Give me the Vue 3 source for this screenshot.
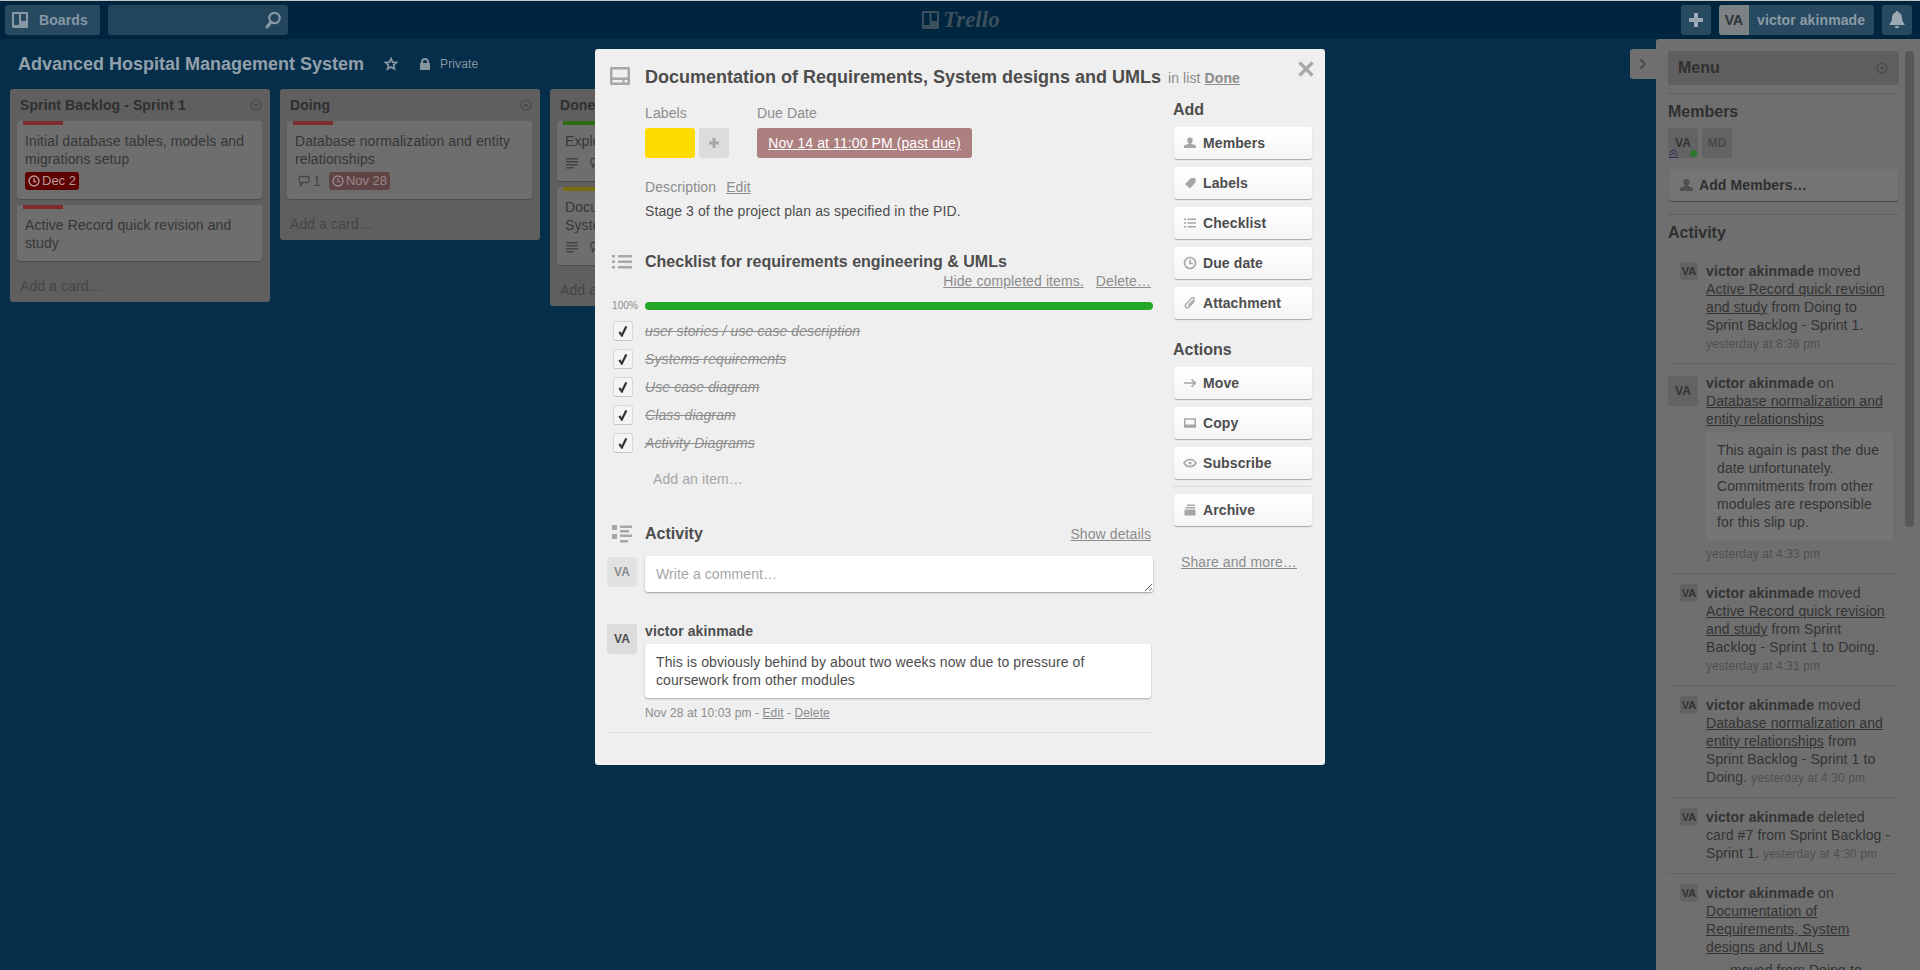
<template>
  <div class="page">
    <header class="topbar">
      <div class="bar-left">
        <button class="bar-btn boards">
          <svg width="16" height="16" viewBox="0 0 16 16"><path fill-rule="evenodd" fill="#8798a5" d="M1 0h14a1 1 0 0 1 1 1v14a1 1 0 0 1-1 1H1a1 1 0 0 1-1-1V1a1 1 0 0 1 1-1zm1 2v11h5V2zm7 0v7h5V2z"/></svg>
          <span>Boards</span>
        </button>
        <div class="search">
          <svg width="18" height="18" viewBox="0 0 18 18" fill="none" stroke="#8798a5"><circle cx="10.5" cy="7" r="5.2" stroke-width="2.2"/><path d="M7 11l-4 5" stroke-width="3" stroke-linecap="round"/></svg>
        </div>
      </div>
      <div class="logo">
        <svg width="17" height="18" viewBox="0 0 17 18"><path fill-rule="evenodd" fill="#3c505e" d="M1.500 0h14A1.500 1.500 0 0 1 17 1.500v15a1.500 1.500 0 0 1-1.500 1.500h-14A1.500 1.500 0 0 1 0 16.500v-15A1.500 1.500 0 0 1 1.500 0zM2 2v12h5.500V2zm7.500 0v8H15V2z"/></svg>
        <span>Trello</span>
      </div>
      <div class="bar-right">
        <button class="bar-btn square">
          <svg width="16" height="16" viewBox="0 0 16 16"><path fill="#9ba8b1" d="M6 1h4v5h5v4h-5v5H6v-5H1V6h5z"/></svg>
        </button>
        <div class="user">
          <span class="user-av">VA</span>
          <span class="user-name">victor akinmade</span>
        </div>
        <button class="bar-btn square">
          <svg width="16" height="18" viewBox="0 0 16 18"><path fill="#9ba8b1" d="M8 0a1.500 1.500 0 0 1 1.500 1.600C12 2.300 13 4.500 13 7c0 3 1 4.500 2.500 6v1H.5v-1C2 11.500 3 10 3 7c0-2.500 1-4.700 3.500-5.400A1.500 1.500 0 0 1 8 0zM5.800 15h4.400a2.200 2.200 0 0 1-4.400 0z"/></svg>
        </button>
      </div>
    </header>

    <section class="board">
      <div class="board-head">
        <h1>Advanced Hospital Management System</h1>
        <svg class="star" width="14" height="14" viewBox="0 0 14 14" fill="none" stroke="#8695a0" stroke-width="1.800"><path d="M7 1.500l1.600 3.600 3.900.4-2.900 2.600.8 3.900L7 10l-3.400 2 .8-3.900-2.900-2.600 3.900-.4z"/></svg>
        <svg class="lock" width="12" height="12" viewBox="0 0 12 12"><path fill="#8695a0" d="M2 5V4a4 4 0 0 1 8 0v1h1v7H1V5zm2 0h4V4a2 2 0 0 0-4 0z"/></svg>
        <span class="private">Private</span>
      </div>
      <div class="lists">
        <div v-for="list in lists" :key="list.name" class="list">
          <div class="list-head">
            <span>{{ list.name }}</span>
            <svg width="12" height="12" viewBox="0 0 12 12" fill="none"><circle cx="6" cy="6" r="5" stroke="#4a4a4a" stroke-width="1.200"/><path d="M3.500 5h5L6 8.500z" fill="#4a4a4a"/></svg>
          </div>
          <div v-for="card in list.cards" :key="card.text" class="card">
            <i class="card-label" :style="{ background: card.label }"></i>
            <p>{{ card.text }}</p>
            <div v-if="card.desc || card.comments || card.due" class="badges">
              <svg v-if="card.desc" width="14" height="12" viewBox="0 0 14 12"><path fill="#444" d="M1 1h12v1.500H1zM1 4h12v1.500H1zM1 7h12v1.500H1zM1 10h8v1.500H1z"/></svg>
              <span v-if="card.comments !== undefined" class="cmt">
                <svg width="12" height="12" viewBox="0 0 12 12" fill="none"><path d="M2.500 1.500h7a1.500 1.500 0 0 1 1.500 1.500v3a1.500 1.500 0 0 1-1.500 1.500H5L2.500 10.500V7.500A1.500 1.500 0 0 1 1 6V3a1.500 1.500 0 0 1 1.500-1.500z" stroke="#444" stroke-width="1.300"/></svg>
                {{ card.comments }}
              </span>
              <span v-if="card.due" class="due-badge" :class="card.dueClass">
                <svg width="12" height="12" viewBox="0 0 12 12" fill="none"><circle cx="6" cy="6" r="5" stroke="currentColor" stroke-width="1.400"/><path d="M6 3v3.500h2.300" stroke="currentColor" stroke-width="1.300"/></svg>
                {{ card.due }}
              </span>
            </div>
          </div>
          <div class="add-card">Add a card…</div>
        </div>
      </div>
    </section>

    <aside class="drawer">
      <div class="drawer-tab">
        <svg width="8" height="12" viewBox="0 0 8 12" fill="none"><path d="M1.500 1.500L6 6l-4.500 4.500" stroke="#4a4a4a" stroke-width="2"/></svg>
      </div>
      <div class="thumb"></div>
      <div class="menu-box">
        <span>Menu</span>
        <svg width="12" height="12" viewBox="0 0 12 12" fill="none"><circle cx="6" cy="6" r="5" stroke="#4a4a4a" stroke-width="1.200"/><path d="M3.500 5h5L6 8.500z" fill="#4a4a4a"/></svg>
      </div>
      <div class="drawer-rule"></div>
      <h3>Members</h3>
      <div class="members">
        <div class="member">VA
          <svg class="admin" width="9" height="9" viewBox="0 0 9 9" fill="none" stroke="#2a2a5a"><path d="M.5 3.500L4.500.8l4 2.700M.5 6.500l4-2.700 4 2.700"/><path d="M0 8.500h9"/></svg>
          <i class="online"></i>
        </div>
        <div class="member dim">MD</div>
      </div>
      <div class="add-members">
        <svg width="13" height="12" viewBox="0 0 13 12"><path fill="#4f4f4f" d="M6.500 0a3 3 0 0 1 3 3.200c0 1.600-.8 2.800-1.600 3.200v.8c2 .4 5 1.200 5 2.500V12H0V9.700c0-1.300 3-2.100 5-2.500v-.8C4.200 6 3.500 4.800 3.500 3.200a3 3 0 0 1 3-3.200z"/></svg>
        <span>Add Members…</span>
      </div>
      <div class="drawer-rule second"></div>
      <h3 class="act-title">Activity</h3>
      <div class="feed">
        <div v-for="(item, i) in feed" :key="i" class="feed-item">
          <div class="gutter"><span class="feed-av" :class="{ big: item.big }">VA</span></div>
          <div class="feed-body">
            <p>
              <b>victor akinmade</b> {{ item.verb }}
              <u>{{ item.link }}</u>{{ item.rest }}
              <small v-if="item.inlineTime">{{ item.inlineTime }}</small>
            </p>
            <div v-if="item.comment" class="feed-comment">{{ item.comment }}</div>
            <p v-if="item.quote" class="feed-quote">{{ item.quote }}</p>
            <small v-if="item.time" class="feed-time">{{ item.time }}</small>
          </div>
        </div>
      </div>
    </aside>

    <div class="modal">
      <div class="modal-main">
        <div class="row title-row">
          <div class="gut">
            <svg class="ic-card" width="20" height="18" viewBox="0 0 20 18"><path fill-rule="evenodd" fill="#a8a8a8" d="M1.500 0h17A1.500 1.500 0 0 1 20 1.500v15a1.500 1.500 0 0 1-1.500 1.500h-17A1.500 1.500 0 0 1 0 16.500v-15A1.500 1.500 0 0 1 1.500 0zM2.500 2.500v8h15v-8zm0 10.500v2.500h10V13zm12 0v2.500h3V13z"/></svg>
          </div>
          <h2>Documentation of Requirements, System designs and UMLs</h2>
        </div>
        <div class="row">
          <div class="gut"></div>
          <div class="meta-cols">
            <div>
              <div class="cap">Labels</div>
              <div class="label-row">
                <i class="yellow"></i>
                <span class="plus">
                  <svg width="12" height="12" viewBox="0 0 12 12"><path fill="#a6a6a6" d="M4.500 1h3v3.500H11v3H7.500V11h-3V7.500H1v-3h3.500z"/></svg>
                </span>
              </div>
            </div>
            <div>
              <div class="cap">Due Date</div>
              <div class="due-date">Nov 14 at 11:00 PM (past due)</div>
            </div>
          </div>
        </div>
        <div class="row desc-head">
          <div class="gut"></div>
          <div class="cap">Description <u class="edit">Edit</u></div>
        </div>
        <div class="row desc">
          <div class="gut"></div>
          <p>Stage 3 of the project plan as specified in the PID.</p>
        </div>
        <div class="row check-title">
          <div class="gut">
            <svg width="20" height="16" viewBox="0 0 20 16"><path fill="#a8a8a8" d="M0 1h3v2.500H0zM6 1h14v2.500H6zM0 6.500h3V9H0zM6 6.500h14V9H6zM0 12h3v2.500H0zM6 12h14v2.500H6z"/></svg>
          </div>
          <h4>Checklist for requirements engineering &amp; UMLs</h4>
        </div>
        <div class="check-actions">
          <u>Hide completed items.</u>
          <u>Delete…</u>
        </div>
        <div class="row progress">
          <div class="gut pct">100%</div>
          <div class="bar"></div>
        </div>
        <ul class="checks">
          <li v-for="c in checks" :key="c">
            <div class="gut">
              <span class="box">
                <svg width="12" height="12" viewBox="0 0 12 12" fill="none"><path d="M2.300 6.800L4.800 10.500 9.300 1.500" stroke="#333" stroke-width="2.200"/></svg>
              </span>
            </div>
            <span class="done">{{ c }}</span>
          </li>
        </ul>
        <div class="add-item">Add an item…</div>
        <div class="row act-row">
          <div class="gut">
            <svg width="20" height="18" viewBox="0 0 20 18"><path fill="#a8a8a8" d="M0 0h5v5H0zM8 .5h12V3H8zM8 5h9v2.500H8zM0 9h5v5H0zM8 9.500h12V12H8zM8 15h8v2.500H8z"/></svg>
          </div>
          <h4>Activity</h4>
          <u class="show">Show details</u>
        </div>
        <div class="row write">
          <div class="av">VA</div>
          <textarea placeholder="Write a comment…"></textarea>
        </div>
        <div class="row comment">
          <div class="av dark">VA</div>
          <div class="comment-main">
            <div class="who">victor akinmade</div>
            <div class="bubble">This is obviously behind by about two weeks now due to pressure of coursework from other modules</div>
            <div class="when">Nov 28 at 10:03 pm - <u>Edit</u> - <u>Delete</u></div>
          </div>
        </div>
        <div class="modal-rule"></div>
      </div>

      <div class="modal-side">
        <div class="in-list">in list <b>Done</b></div>
        <svg class="close" width="16" height="16" viewBox="0 0 16 16" fill="none"><path d="M1.500 1.500l13 13M14.500 1.500l-13 13" stroke="#a8a8a8" stroke-width="3.200"/></svg>
        <h5>Add</h5>
        <button v-for="b in addButtons" :key="b.text" class="side-btn">
          <svg width="14" height="14" viewBox="0 0 14 14" v-html="b.icon"></svg>
          <span>{{ b.text }}</span>
        </button>
        <h5 class="actions">Actions</h5>
        <button v-for="b in actionButtons" :key="b.text" class="side-btn">
          <svg width="14" height="14" viewBox="0 0 14 14" v-html="b.icon"></svg>
          <span>{{ b.text }}</span>
        </button>
        <div class="side-rule"></div>
        <button class="side-btn">
          <svg width="14" height="14" viewBox="0 0 14 14" v-html="archiveIcon"></svg>
          <span>Archive</span>
        </button>
        <u class="share">Share and more…</u>
      </div>
    </div>
  </div>
</template>

<script setup>
const lists = [
  {
    name: 'Sprint Backlog - Sprint 1',
    cards: [
      { label: '#7f2b2b', text: 'Initial database tables, models and migrations setup', due: 'Dec 2', dueClass: 'red' },
      { label: '#7f2b2b', text: 'Active Record quick revision and study' },
    ],
  },
  {
    name: 'Doing',
    cards: [
      { label: '#7f2b2b', text: 'Database normalization and entity relationships', comments: 1, due: 'Nov 28', dueClass: 'past' },
    ],
  },
  {
    name: 'Done',
    cards: [
      { label: '#2f6b12', text: 'Exploration of requirements', desc: true, comments: 1 },
      { label: '#7a6c10', text: 'Documentation of Requirements, System designs and UMLs', desc: true, comments: 1 },
    ],
  },
]

const checks = [
  'user stories / use case description',
  'Systems requirements',
  'Use case diagram',
  'Class diagram',
  'Activity Diagrams',
]

const c = '#a6a6a6'
const addButtons = [
  { text: 'Members', icon: `<path fill="${c}" d="M7 1.500a2.700 2.700 0 0 1 2.700 2.900c0 1.300-.6 2.400-1.400 2.800v.7c1.700.4 4.700 1 4.700 2.300v1.800H1v-1.800c0-1.300 3-1.900 4.700-2.300v-.7C4.900 6.800 4.300 5.700 4.300 4.400A2.700 2.700 0 0 1 7 1.500z"/>` },
  { text: 'Labels', icon: `<path fill="${c}" d="M8 2h4.500v4.500L7 12.500 2 8z"/>` },
  { text: 'Checklist', icon: `<path fill="${c}" d="M1 2.500h2v1.400H1zM4.500 2.500h8.500v1.400H4.500zM1 6.300h2v1.400H1zM4.500 6.300h8.500v1.400H4.500zM1 10.100h2v1.400H1zM4.500 10.100h8.500v1.400H4.500z"/>` },
  { text: 'Due date', icon: `<circle cx="7" cy="7" r="5.500" fill="none" stroke="${c}" stroke-width="1.600"/><path d="M7 3.500V7.500h2.800" fill="none" stroke="${c}" stroke-width="1.500"/>` },
  { text: 'Attachment', icon: `<path fill="none" stroke="${c}" stroke-width="1.300" d="M11.500 5L5.800 11.200a2 2 0 0 1-3-2.800l6-6.500a1.300 1.300 0 0 1 2 1.700L5.500 9.200"/>` },
]
const actionButtons = [
  { text: 'Move', icon: `<path fill="none" stroke="${c}" stroke-width="1.600" d="M1 7h11M8.500 3.200L12.300 7l-3.800 3.800"/>` },
  { text: 'Copy', icon: `<path fill="none" stroke="${c}" stroke-width="1.500" d="M1.800 3h10.400v8H1.800z"/><path fill="${c}" d="M2 8.500h10v2.500H2z"/>` },
  { text: 'Subscribe', icon: `<path fill="none" stroke="${c}" stroke-width="1.500" d="M1 7c1.500-2.500 3.500-3.500 6-3.500s4.500 1 6 3.500c-1.500 2.500-3.500 3.500-6 3.500S2.500 9.500 1 7z"/><circle cx="7" cy="7" r="1.500" fill="${c}"/>` },
]
const archiveIcon = `<path fill="${c}" d="M4 1.500h8v1.400H4zM2.500 4h9.500v1.400H2.500zM1.500 6.500h11v6h-11z"/>`

const feed = [
  { verb: 'moved', link: 'Active Record quick revision and study', rest: ' from Doing to Sprint Backlog - Sprint 1.', time: 'yesterday at 8:36 pm' },
  { big: true, verb: 'on', link: 'Database normalization and entity relationships', rest: '', comment: 'This again is past the due date unfortunately. Commitments from other modules are responsible for this slip up.', time: 'yesterday at 4:33 pm' },
  { verb: 'moved', link: 'Active Record quick revision and study', rest: ' from Sprint Backlog - Sprint 1 to Doing.', time: 'yesterday at 4:31 pm' },
  { verb: 'moved', link: 'Database normalization and entity relationships', rest: ' from Sprint Backlog - Sprint 1 to Doing.', inlineTime: 'yesterday at 4:30 pm' },
  { verb: 'deleted card #7 from Sprint Backlog - Sprint 1.', link: '', rest: '', inlineTime: 'yesterday at 4:30 pm' },
  { verb: 'on', link: 'Documentation of Requirements, System designs and UMLs', rest: '', quote: 'moved from Doing to' },
]
</script>

<style>
html, body {
  margin: 0;
  height: 970px;
  overflow: hidden;
  background: #052e4b;
}
</style>

<style scoped>
.page {
  position: relative;
  width: 1920px;
  height: 970px;
  overflow: hidden;
  background: #052e4b;
  font-family: "Liberation Sans", Arial, sans-serif;
  font-size: 14px;
  line-height: 18px;
  letter-spacing: .1px;
  color: #4d4d4d;
}
p, h1, h2, h3, h4, h5, ul { margin: 0; padding: 0; }
h1, h2, h3, h4, h5 { letter-spacing: 0; }
button { font-family: inherit; letter-spacing: inherit; border: 0; padding: 0; margin: 0; }

.topbar {
  height: 38px;
  border-top: 1px solid #c4c4c4;
  background: #00263f;
  display: flex;
  align-items: center;
  justify-content: space-between;
  padding: 0 8px 0 5px;
  position: relative;
}
.bar-left, .bar-right { display: flex; align-items: center; gap: 8px; }
.bar-btn {
  height: 30px;
  background: #274a60;
  border-radius: 3px;
  display: flex;
  align-items: center;
  justify-content: center;
  color: #8798a5;
  font-weight: bold;
  font-size: 14px;
}
.boards { width: 95px; justify-content: flex-start; padding-left: 7px; box-sizing: border-box; gap: 11px; }
.square { width: 30px; }
.search {
  width: 180px;
  height: 30px;
  background: #24465c;
  border-radius: 3px;
  display: flex;
  align-items: center;
  justify-content: flex-end;
  padding-right: 6px;
  box-sizing: border-box;
}
.logo {
  position: absolute;
  left: 922px;
  top: 8px;
  display: flex;
  align-items: center;
  gap: 4px;
  color: #3c505e;
  font-family: "Liberation Serif", serif;
  font-style: italic;
  font-weight: bold;
  font-size: 23px;
  line-height: 22px;
  letter-spacing: 0;
}
.user { display: flex; height: 30px; border-radius: 3px; overflow: hidden; background: #274a60; }
.user-av { width: 30px; background: #7c8184; color: #2c3338; font-weight: bold; text-align: center; line-height: 30px; }
.user-name { padding: 0 8px; line-height: 30px; color: #8c9aa5; font-weight: bold; width: 109px; white-space: nowrap; }

.board { padding: 0 0 0 10px; }
.board-head { height: 50px; display: flex; align-items: center; }
.board-head h1 { font-size: 18px; line-height: 22px; font-weight: bold; color: #93a0aa; margin-left: 8px; }
.star { margin-left: 20px; }
.lock { margin-left: 21px; }
.private { margin-left: 9px; font-size: 12px; color: #8695a0; }
.lists { display: flex; align-items: flex-start; gap: 10px; }
.list { width: 260px; background: #5f5f5f; border-radius: 3px; padding: 0 8px; box-sizing: border-box; }
.list-head {
  height: 32px;
  display: flex;
  align-items: center;
  justify-content: space-between;
  padding: 0 1px 0 2px;
  font-weight: bold;
  color: #2f2f2f;
}
.list-head svg { margin-right: -1px; }
.card {
  width: 245px;
  margin-left: -1px;
  margin-bottom: 6px;
  background: #6e6e6e;
  border-radius: 3px;
  padding: 11px 8px 9px;
  box-sizing: border-box;
  position: relative;
  box-shadow: 0 1px 1px rgba(0,0,0,.2);
  color: #363636;
}
.card-label { position: absolute; left: 6px; top: 0; width: 40px; height: 4px; }
.badges { display: flex; align-items: center; gap: 8px; margin-top: 4px; height: 18px; }
.cmt { display: flex; align-items: center; gap: 3px; padding-left: 3px; color: #444; }
.due-badge {
  display: flex;
  align-items: center;
  gap: 2px;
  height: 18px;
  padding: 0 3px;
  border-radius: 3px;
  font-size: 13px;
  letter-spacing: 0;
}
.due-badge.red { background: #5c0000; color: #b89c9c; }
.due-badge.past { background: #5f4545; color: #9a8888; }
.add-card { height: 35px; padding: 10px 2px 0; color: #454545; box-sizing: border-box; }

.drawer {
  position: absolute;
  left: 1656px;
  top: 39px;
  width: 264px;
  height: 931px;
  background: #6f6f6f;
  border-top-left-radius: 3px;
  padding: 12px 21px 0 12px;
  box-sizing: border-box;
  color: #333;
}
.drawer-tab {
  position: absolute;
  left: -26px;
  top: 10px;
  width: 26px;
  height: 30px;
  background: #6f6f6f;
  border-radius: 3px 0 0 3px;
  display: flex;
  align-items: center;
  justify-content: center;
}
.thumb {
  position: absolute;
  left: 249px;
  top: 12px;
  width: 9px;
  height: 476px;
  background: #585858;
  border-radius: 4px;
}
.menu-box {
  height: 34px;
  width: 231px;
  background: #5f5f5f;
  border-radius: 3px;
  display: flex;
  align-items: center;
  justify-content: space-between;
  padding: 0 11px 0 10px;
  box-sizing: border-box;
  font-weight: bold;
  font-size: 16px;
  letter-spacing: 0;
  color: #2f2f2f;
}
.drawer-rule { height: 1px; background: #606060; margin-top: 8px; width: 231px; }
.drawer h3 { font-size: 16px; line-height: 20px; font-weight: bold; color: #2f2f2f; margin-top: 8px; }
.members { display: flex; gap: 4px; margin-top: 6px; }
.member {
  width: 30px;
  height: 30px;
  background: #636363;
  border-radius: 3px;
  position: relative;
  font-weight: bold;
  font-size: 12px;
  line-height: 30px;
  text-align: center;
  color: #333;
}
.member.dim { color: #4a4a4a; }
.admin { position: absolute; left: 1px; bottom: 0; }
.online { position: absolute; right: 1px; bottom: 1px; width: 7px; height: 7px; border-radius: 50%; background: #2d7a2d; }
.add-members {
  width: 229px;
  height: 32px;
  margin: 11px 0 0 1px;
  background: #757575;
  border-radius: 3px;
  box-shadow: 0 1px 1px rgba(0,0,0,.35);
  display: flex;
  align-items: center;
  gap: 6px;
  padding-left: 11px;
  box-sizing: border-box;
  font-weight: bold;
  color: #2f2f2f;
}
.drawer-rule.second { margin-top: 13px; }
.drawer h3.act-title { margin-top: 8px; }
.feed { margin-top: 9px; width: 227px; }
.feed-item { display: flex; padding: 10px 0; border-bottom: 1px solid #636363; }
.gutter { width: 38px; flex: none; display: flex; justify-content: flex-end; align-items: flex-start; padding-right: 8px; box-sizing: border-box; }
.feed-av {
  width: 18px;
  height: 18px;
  background: #636363;
  border-radius: 3px;
  font-weight: bold;
  font-size: 11px;
  line-height: 18px;
  text-align: center;
  color: #333;
  letter-spacing: 0;
}
.feed-av.big { width: 30px; height: 30px; line-height: 30px; font-size: 12px; margin-top: 2px; }
.feed-body { flex: 1; min-width: 0; }
.feed-body u { text-decoration: underline; }
small { font-size: 12px; color: #4f4f4f; }
.feed-comment { margin-top: 4px; padding: 9px 11px; background: #757575; border-radius: 3px; width: 165px; }
.feed-quote { margin-top: 5px; padding-left: 24px; }
.feed-time { display: block; margin-top: 1px; }
.feed-comment + .feed-time { margin-top: 5px; }

.modal {
  position: absolute;
  left: 595px;
  top: 49px;
  width: 730px;
  height: 716px;
  background: #efefef;
  border-radius: 3px;
  display: flex;
}
.modal-main { width: 546px; margin-left: 12px; padding-top: 18px; }
.row { display: flex; }
.gut { width: 38px; flex: none; }
.ic-card { display: block; margin-left: 3px; }
.title-row h2 { font-size: 18px; line-height: 20px; font-weight: bold; white-space: nowrap; }
.meta-cols { display: flex; gap: 28px; margin-top: 17px; }
.cap { color: #8c8c8c; }
.label-row { display: flex; gap: 4px; margin-top: 6px; }
.yellow { width: 50px; height: 30px; background: #ffdc00; border-radius: 3px; }
.plus { width: 30px; height: 30px; background: #dcdcdc; border-radius: 3px; display: flex; align-items: center; justify-content: center; }
.due-date {
  margin-top: 6px;
  width: 215px;
  height: 30px;
  line-height: 30px;
  background: #ad8080;
  border-radius: 3px;
  color: #fff;
  font-size: 14px;
  text-align: center;
  text-decoration: underline;
}
.desc-head { margin-top: 20px; }
.edit { margin-left: 6px; }
.desc { margin-top: 6px; }
.check-title { margin-top: 32px; align-items: center; }
.check-title .gut svg, .act-row .gut svg { margin-left: 5px; display: block; }
h4 { font-size: 16px; line-height: 20px; font-weight: bold; }
.check-actions { display: flex; justify-content: flex-end; gap: 12px; margin-top: 0; padding-right: 2px; color: #8c8c8c; }
.progress { margin-top: 12px; align-items: center; height: 8px; }
.pct { font-size: 10px; color: #8c8c8c; padding-left: 5px; box-sizing: border-box; }
.bar { width: 508px; height: 8px; border-radius: 4px; background: #25a82a; }
.checks { list-style: none; margin-top: 11px; display: flex; flex-direction: column; gap: 8px; }
.checks li { display: flex; align-items: center; height: 20px; }
.box {
  display: flex;
  align-items: center;
  justify-content: center;
  width: 20px;
  height: 20px;
  margin-left: 6px;
  background: #f4f4f4;
  border-radius: 3px;
  box-sizing: border-box;
  border: 1px solid #d8d8d8;
  border-bottom-color: #c4c4c4;
}
.done { color: #8c8c8c; font-style: italic; text-decoration: line-through; }
.add-item { margin: 17px 0 0 46px; color: #a6a6a6; }
.act-row { margin-top: 36px; align-items: center; padding-right: 2px; }
.show { margin-left: auto; color: #8c8c8c; }
.write { margin-top: 12px; }
.av {
  width: 30px;
  height: 30px;
  margin: 1px 8px 0 0;
  flex: none;
  background: #e2e2e2;
  border-radius: 3px;
  font-weight: bold;
  font-size: 12px;
  line-height: 30px;
  text-align: center;
  color: #8c8c8c;
}
.av.dark { background: #dcdcdc; color: #4d4d4d; margin-top: 0; }
textarea {
  width: 508px;
  height: 36px;
  border: 0;
  outline: 0;
  margin: 0;
  padding: 9px 11px 7px;
  box-sizing: border-box;
  background: #fff;
  border-radius: 3px;
  box-shadow: 0 1px 2px rgba(0,0,0,.35);
  font-family: inherit;
  font-size: 14px;
  line-height: 18px;
  letter-spacing: inherit;
  display: block;
}
textarea::placeholder { color: #a6a6a6; opacity: 1; }
.comment { margin-top: 32px; }
.comment-main { width: 506px; }
.who { font-weight: bold; font-size: 14px; line-height: 16px; margin-top: -1px; }
.bubble {
  margin-top: 5px;
  padding: 9px 11px;
  background: #fff;
  border-radius: 3px;
  box-shadow: 0 1px 2px rgba(0,0,0,.3);
}
.when { margin-top: 6px; font-size: 12px; color: #8c8c8c; }
.modal-rule { height: 1px; background: #dcdcdc; margin-top: 10px; }

.modal-side { position: relative; margin-left: 21px; width: 138px; padding-top: 51px; flex: none; }
.in-list { position: absolute; left: -6px; top: 20px; color: #8c8c8c; white-space: nowrap; }
.in-list b { text-decoration: underline; }
.close { position: absolute; left: 124px; top: 12px; }
h5 { font-size: 16px; line-height: 20px; font-weight: bold; margin-bottom: 7px; margin-left: -1px; }
h5.actions { margin-top: 21px; }
.side-btn {
  display: flex;
  align-items: center;
  gap: 6px;
  width: 138px;
  height: 32px;
  padding-left: 9px;
  box-sizing: border-box;
  margin-bottom: 8px;
  border-radius: 3px;
  background: linear-gradient(#fff, #f5f5f5);
  box-shadow: 0 1px 1px rgba(0,0,0,.3);
  color: #4d4d4d;
  font-weight: bold;
  font-size: 14px;
}
.side-rule { height: 1px; background: #dcdcdc; margin: -1px -1px 7px; }
.share { display: block; margin: 27px 0 0 7px; color: #8c8c8c; white-space: nowrap; }
</style>
